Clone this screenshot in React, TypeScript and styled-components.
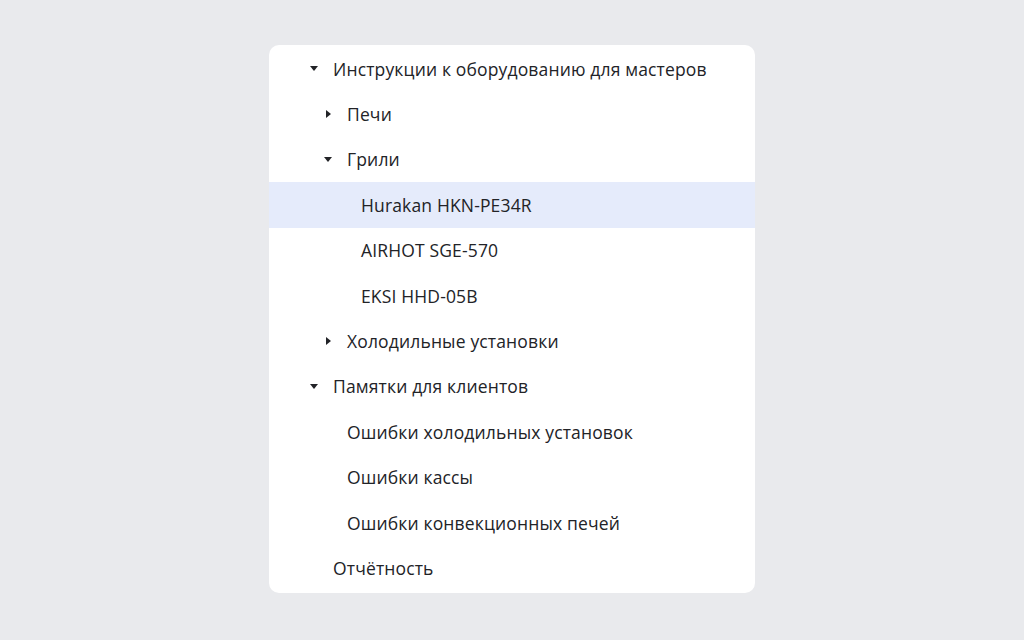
import styled, { createGlobalStyle } from "styled-components";

const Global = createGlobalStyle`
  html, body {
    margin: 0;
    padding: 0;
    background: #e9eaed;
    font-family: "Open Sans", "Noto Sans", sans-serif;
  }
`;

const Page = styled.div`
  width: 1024px;
  height: 640px;
  display: flex;
  justify-content: center;
  align-items: flex-start;
  padding-top: 45px;
  box-sizing: border-box;
`;

const Card = styled.div`
  width: 486px;
  height: 548px;
  background: #ffffff;
  border-radius: 10px;
  padding: 1px 0 2px;
  box-sizing: border-box;
  overflow: hidden;
`;

const Row = styled.div<{ $level: number; $active?: boolean }>`
  height: 45.4px;
  display: flex;
  align-items: center;
  padding-left: ${(p) => 64 + p.$level * 14}px;
  background: ${(p) => (p.$active ? "#e5ebfb" : "transparent")};
  color: #222327;
  font-size: 17.5px;
  letter-spacing: 0.15px;
  position: relative;
`;

const Caret = styled.span<{ $open: boolean }>`
  position: absolute;
  margin-left: -24px;
  width: 10px;
  height: 10px;
  display: flex;
  align-items: center;
  justify-content: center;

  &::before {
    content: "";
    display: block;
    width: 0;
    height: 0;
    ${(p) =>
      p.$open
        ? `border-left: 4.5px solid transparent;
           border-right: 4.5px solid transparent;
           border-top: 5px solid #222327;`
        : `border-top: 4.5px solid transparent;
           border-bottom: 4.5px solid transparent;
           border-left: 5px solid #222327;`}
  }
`;

type Item = { label: string; level: number; caret?: "open" | "closed"; active?: boolean };

const items: Item[] = [
  { label: "Инструкции к оборудованию для мастеров", level: 0, caret: "open" },
  { label: "Печи", level: 1, caret: "closed" },
  { label: "Грили", level: 1, caret: "open" },
  { label: "Hurakan HKN-PE34R", level: 2, active: true },
  { label: "AIRHOT SGE-570", level: 2 },
  { label: "EKSI HHD-05B", level: 2 },
  { label: "Холодильные установки", level: 1, caret: "closed" },
  { label: "Памятки для клиентов", level: 0, caret: "open" },
  { label: "Ошибки холодильных установок", level: 1 },
  { label: "Ошибки кассы", level: 1 },
  { label: "Ошибки конвекционных печей", level: 1 },
  { label: "Отчётность", level: 0 },
];

export default function App() {
  return (
    <>
      <Global />
      <Page>
        <Card>
          {items.map((it) => (
            <Row key={it.label} $level={it.level} $active={it.active}>
              {it.caret && <Caret $open={it.caret === "open"} />}
              {it.label}
            </Row>
          ))}
        </Card>
      </Page>
    </>
  );
}
